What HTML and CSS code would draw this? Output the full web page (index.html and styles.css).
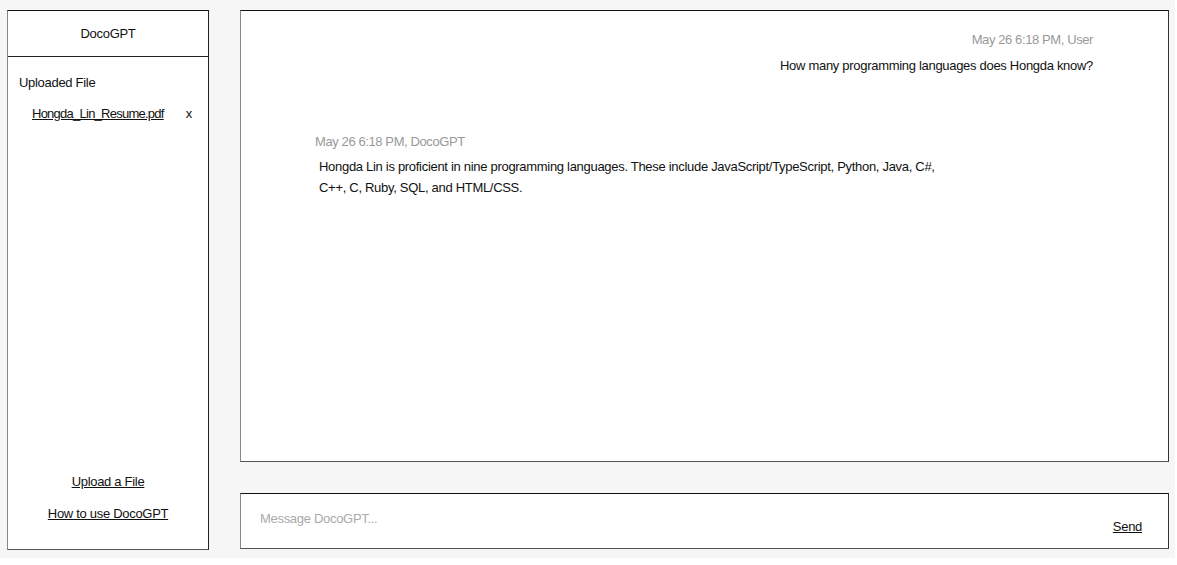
FILE: index.html
```html
<!DOCTYPE html>
<html>
<head>
<meta charset="utf-8">
<link rel="stylesheet" href="styles.css">
</head>
<body>
<div class="app">
  <aside class="sidebar">
    <div class="side-header">DocoGPT</div>
    <div class="side-body">
      <div class="side-label">Uploaded File</div>
      <div class="file-row">
        <a class="file-link" href="#">Hongda_Lin_Resume.pdf</a>
        <span class="file-remove">x</span>
      </div>
    </div>
    <div class="side-footer">
      <a class="side-link" href="#">Upload a File</a>
      <a class="side-link" href="#">How to use DocoGPT</a>
    </div>
  </aside>
  <main class="main">
    <section class="chat">
      <div class="msg msg-user">
        <div class="meta">May 26 6:18 PM, User</div>
        <div class="text">How many programming languages does Hongda know?</div>
      </div>
      <div class="msg msg-bot">
        <div class="meta">May 26 6:18 PM, DocoGPT</div>
        <div class="text">Hongda Lin is proficient in nine programming languages. These include JavaScript/TypeScript, Python, Java, C#, C++, C, Ruby, SQL, and HTML/CSS.</div>
      </div>
    </section>
    <section class="composer">
      <div class="placeholder">Message DocoGPT...</div>
      <a class="send" href="#">Send</a>
    </section>
  </main>
</div>
</body>
</html>
```
FILE: styles.css
```css
html, body {
  margin: 0;
  padding: 0;
  background: #ffffff;
}
body {
  font-family: "Liberation Sans", Arial, sans-serif;
  font-size: 13px;
  color: #111;
}
a {
  color: #111;
  text-decoration: underline;
}
.app {
  box-sizing: border-box;
  width: 1175px;
  height: 558px;
  padding: 10px 6px 9px 7px;
  background: #f6f6f6;
  display: flex;
  gap: 31px;
}
.sidebar {
  box-sizing: border-box;
  width: 202px;
  height: 540px;
  background: #fff;
  border-top: 1px solid #111;
  border-left: 1px solid #888;
  border-right: 1px solid #222;
  border-bottom: 1px solid #555;
  display: flex;
  flex-direction: column;
}
.side-header {
  height: 45px;
  border-bottom: 1px solid #222;
  display: flex;
  align-items: center;
  justify-content: center;
  letter-spacing: -0.3px;
}
.side-body {
  flex: 1;
  padding: 18px 11px 0 11px;
}
.side-label {
  letter-spacing: -0.3px;
}
.file-row {
  margin-top: 16px;
  padding-left: 13px;
  display: flex;
  align-items: center;
}
.file-link {
  letter-spacing: -0.75px;
}
.file-remove {
  margin-left: 22px;
}
.side-footer {
  display: flex;
  flex-direction: column;
  align-items: center;
  gap: 17px;
  padding-bottom: 28px;
}
.side-link {
  letter-spacing: -0.3px;
}
.main {
  flex: 1;
  display: flex;
  flex-direction: column;
  gap: 31px;
}
.chat {
  box-sizing: border-box;
  height: 453px;
  background: #fff;
  border-top: 1px solid #111;
  border-left: 1px solid #888;
  border-right: 1px solid #333;
  border-bottom: 1px solid #555;
  padding: 21px 75px 0 74px;
}
.msg .meta {
  color: #999;
  letter-spacing: -0.4px;
}
.msg .text {
  letter-spacing: -0.3px;
}
.msg-user {
  text-align: right;
}
.msg-user .text {
  margin-top: 11px;
}
.msg-bot {
  margin-top: 61px;
}
.msg-bot .text {
  margin-top: 7px;
  padding-left: 4px;
  max-width: 620px;
  line-height: 21px;
}
.composer {
  box-sizing: border-box;
  height: 56px;
  background: #fff;
  border-top: 1px solid #111;
  border-left: 1px solid #888;
  border-right: 1px solid #333;
  border-bottom: 1px solid #555;
  display: flex;
  justify-content: space-between;
  padding: 17px 26px 0 19px;
}
.placeholder {
  color: #aaa;
  letter-spacing: -0.3px;
}
.send {
  align-self: flex-start;
  margin-top: 8px;
  letter-spacing: -0.3px;
}
```
